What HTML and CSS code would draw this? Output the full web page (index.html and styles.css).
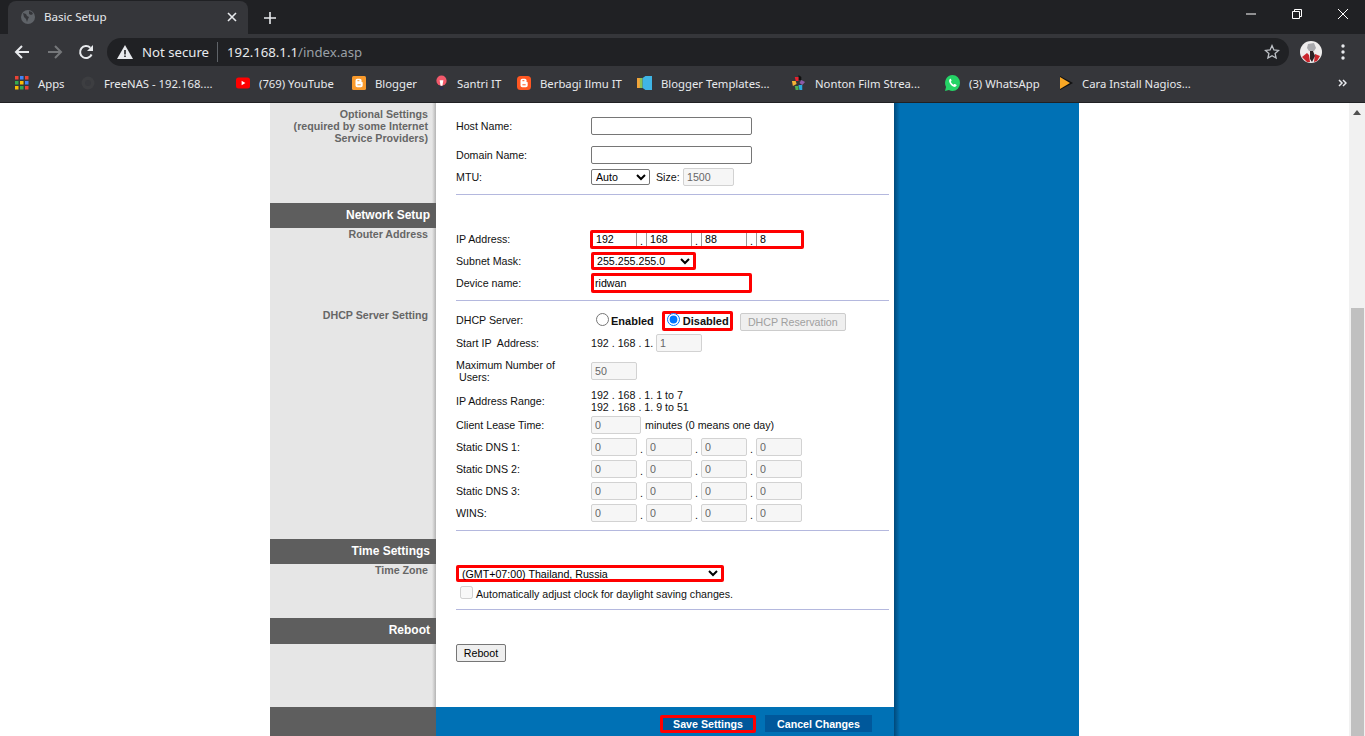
FILE: index.html
```html
<!DOCTYPE html>
<html lang="en">
<head>
  <meta charset="UTF-8">
  <title>Basic Setup</title>
  <link rel="stylesheet" href="styles.css">
</head>
<body>

  <!-- browser chrome -->
  <div class="tabstrip">
    <div class="tab">
      <svg class="tab-icon" width="14" height="14" viewBox="0 0 14 14"><circle cx="7" cy="7" r="7" fill="#5f6368"/><path d="M2 3l3 1 1 2 2 1-1 2-1 3-1-3-2-2zM8 1l3 1 1 2-2 1-2-1z" fill="#35363a"/></svg>
      <span class="tab-title">Basic Setup</span>
      <svg class="tab-close" width="10" height="10" viewBox="0 0 10 10"><path d="M1 1l8 8M9 1l-8 8" stroke="#e8eaed" stroke-width="1.6"/></svg>
    </div>
    <svg class="new-tab" width="12" height="12" viewBox="0 0 12 12"><path d="M6 0v12M0 6h12" stroke="#e8eaed" stroke-width="1.6"/></svg>
    <div class="win-controls">
      <svg width="10" height="10" viewBox="0 0 10 10"><path d="M0 5h10" stroke="#fff"/></svg>
      <svg width="10" height="10" viewBox="0 0 10 10" fill="none"><path d="M.5 2.5h7v7h-7zM2.5 2.5v-2h7v7h-2" stroke="#fff"/></svg>
      <svg width="10" height="10" viewBox="0 0 10 10"><path d="M0 0l10 10M10 0l-10 10" stroke="#fff"/></svg>
    </div>
  </div>

  <div class="toolbar">
    <svg class="nav-icon" width="16" height="16" viewBox="0 0 16 16" fill="none"><path d="M15 8H2M8 2L2 8l6 6" stroke="#e8eaed" stroke-width="2"/></svg>
    <svg class="nav-icon forward" width="16" height="16" viewBox="0 0 16 16" fill="none"><path d="M1 8h13M8 2l6 6-6 6" stroke="#75777a" stroke-width="2"/></svg>
    <svg class="nav-icon" width="16" height="16" viewBox="0 0 16 16" fill="none"><path d="M13.6 10.5A6 6 0 1 1 12.3 3.8" stroke="#e8eaed" stroke-width="2"/><path d="M15 1v6H9z" fill="#e8eaed"/></svg>
    <div class="omnibox">
      <svg width="16" height="14" viewBox="0 0 16 14"><path d="M8 0l8 14H0z" fill="#e8eaed"/><path d="M7.2 5h1.6v4.5H7.2zM7.2 10.5h1.6V12H7.2z" fill="#202124"/></svg>
      <span class="not-secure">Not secure</span>
      <span class="url"><b>192.168.1.1</b>/index.asp</span>
      <svg class="star" width="16" height="16" viewBox="0 0 16 16" fill="none"><path d="M8 1.6l1.9 4.3 4.7.5-3.5 3.1 1 4.6L8 11.8l-4.1 2.3 1-4.6L1.400 6.400l4.700-.5z" stroke="#bdc1c6" stroke-width="1.300"/></svg>
    </div>
    <svg class="avatar" width="22" height="22" viewBox="0 0 22 22"><circle cx="11" cy="11" r="11" fill="#efeded"/><path d="M8 3l6-1 2 5-2 3H9L7 7z" fill="#a9a9ad"/><path d="M2 16l5-4 2 2 1 7H7zM15 13l5 2-3 5-3 1z" fill="#c9252c"/><path d="M10 10h3l2 5-3 6-2-3z" fill="#2b2124"/></svg>
    <svg class="menu-dots" width="4" height="16" viewBox="0 0 4 16"><circle cx="2" cy="2" r="1.700" fill="#e8eaed"/><circle cx="2" cy="8" r="1.700" fill="#e8eaed"/><circle cx="2" cy="14" r="1.700" fill="#e8eaed"/></svg>
  </div>

  <div class="bookmarks">
    <div class="bm">
      <svg width="14" height="14" viewBox="0 0 14 14"><path d="M0 0h3.500v3.500H0z" fill="#ea4335"/><path d="M5 0h3.500v3.500H5z" fill="#4285f4"/><path d="M10 0h3.500v3.500H10z" fill="#ea4335"/><path d="M0 5h3.500v3.500H0z" fill="#34a853"/><path d="M5 5h3.500v3.500H5z" fill="#fbbc05"/><path d="M10 5h3.500v3.500H10z" fill="#4285f4"/><path d="M0 10h3.500v3.500H0z" fill="#fbbc05"/><path d="M5 10h3.500v3.500H5z" fill="#34a853"/><path d="M10 10h3.500v3.500H10z" fill="#ea4335"/></svg>
      <span>Apps</span>
    </div>
    <div class="bm">
      <svg width="14" height="14" viewBox="0 0 14 14"><circle cx="7" cy="7" r="6.500" fill="#3d3e41"/><circle cx="7" cy="7" r="3" fill="#38393d"/></svg>
      <span>FreeNAS - 192.168....</span>
    </div>
    <div class="bm">
      <svg width="14" height="14" viewBox="0 0 14 14"><rect y="1.500" width="14" height="11" rx="2.500" fill="#f00"/><path d="M5.600 4.800L9.400 7l-3.800 2.200z" fill="#fff"/></svg>
      <span>(769) YouTube</span>
    </div>
    <div class="bm">
      <svg width="14" height="14" viewBox="0 0 14 14"><rect width="14" height="14" rx="1.500" fill="#f99a2c"/><path d="M3.500 4.500A1.800 1.800 0 0 1 5.300 2.700h2.200A2 2 0 0 1 9.400 5.600v.2h.3a1 1 0 0 1 1 1v2.700a1.800 1.800 0 0 1-1.800 1.800H5.300a1.800 1.800 0 0 1-1.800-1.800z" fill="#fff"/><path d="M5.400 4.700h2M5.400 8.800h3.300" stroke="#f99a2c"/></svg>
      <span>Blogger</span>
    </div>
    <div class="bm">
      <svg width="13" height="16" viewBox="0 0 14 16"><circle cx="7" cy="5.500" r="5.500" fill="#f2596b"/><path d="M5 5h4L8 11H6z" fill="#fff"/><path d="M5 12h4v3H5z" fill="#2b2c52"/></svg>
      <span>Santri IT</span>
    </div>
    <div class="bm">
      <svg width="14" height="14" viewBox="0 0 14 14"><rect width="14" height="14" rx="3.500" fill="#ff5722"/><path d="M3.500 4.500A1.800 1.800 0 0 1 5.300 2.700h2.200A2 2 0 0 1 9.400 5.600v.2h.3a1 1 0 0 1 1 1v2.700a1.800 1.800 0 0 1-1.800 1.800H5.300a1.800 1.800 0 0 1-1.800-1.800z" fill="#fff"/><path d="M5.400 4.700h2M5.400 8.800h3.300" stroke="#ff5722"/></svg>
      <span>Berbagi Ilmu IT</span>
    </div>
    <div class="bm">
      <svg width="15" height="16" viewBox="0 0 16 16" preserveAspectRatio="none"><path d="M0 3h4v10H0z" fill="#f2a33a"/><path d="M3 3h3v10H3z" fill="#8cc152"/><path d="M6 3l3-2h7v14H9l-3-2z" fill="#3fb5e5"/></svg>
      <span>Blogger Templates...</span>
    </div>
    <div class="bm">
      <svg width="15" height="16" viewBox="0 0 16 16" preserveAspectRatio="none"><path d="M8 0l3 2v3H8z" fill="#111"/><path d="M4 2h4v4H5z" fill="#e8212e"/><path d="M11 5l4 2-3 3-3-2z" fill="#8e5aa8"/><path d="M1 6h4l1 3-4 2z" fill="#f5b335"/><path d="M4 11h4v4H5z" fill="#4caf50"/><path d="M8 10h4v5H9z" fill="#2aa9e0"/></svg>
      <span>Nonton Film Strea...</span>
    </div>
    <div class="bm">
      <svg width="15" height="16" viewBox="0 0 16 16" preserveAspectRatio="none"><path d="M8 0a8 8 0 0 1 0 16 8 8 0 0 1-3.800-1L0 16l1.100-4A8 8 0 0 1 8 0z" fill="#25d366"/><path d="M5.500 3.800c-.8.500-1.400 1.500-1 3 .5 2 2.500 4.300 4.800 5 1.400.4 2.400 0 3-1 .2-.4.100-.8-.2-1l-1.500-.8c-.3-.2-.6-.1-.8.100l-.6.700C8 9.200 6.800 8 6.200 6.800l.6-.7c.2-.2.200-.5.100-.8l-.6-1.300c-.2-.4-.500-.4-.800-.2z" fill="#fff"/></svg>
      <span>(3) WhatsApp</span>
    </div>
    <div class="bm">
      <svg width="13" height="14" viewBox="0 0 13 14"><path d="M0 0l13 7-13 7z" fill="#111"/><path d="M0 1l10 6-10 6z" fill="#f9a825"/></svg>
      <span>Cara Install Nagios...</span>
    </div>
    <svg class="bm-more" width="9" height="8" viewBox="0 0 9 8" fill="none"><path d="M1 1l3 3-3 3M5 1l3 3-3 3" stroke="#e8eaed" stroke-width="1.500"/></svg>
  </div>

  <!-- router page -->
  <div class="viewport">
    <div class="wrapper">

      <div class="sidebar">
        <p class="side-label optional">Optional Settings<br>(required by some Internet<br>Service Providers)</p>
        <h3 class="side-band network">Network Setup</h3>
        <p class="side-label">Router Address</p>
        <p class="side-label dhcp">DHCP Server Setting</p>
        <h3 class="side-band time">Time Settings</h3>
        <p class="side-label">Time Zone</p>
        <h3 class="side-band reboot">Reboot</h3>
        <div class="side-foot"></div>
      </div>

      <div class="main">
        <div class="form">
          <div class="row host"><label>Host Name:</label><input class="wide" type="text"></div>
          <div class="row domain"><label>Domain Name:</label><input class="wide" type="text"></div>
          <div class="row mtu">
            <label>MTU:</label>
            <select class="mtu-select"><option>Auto</option></select>
            <span class="size-label">Size:</span>
            <input class="size-input" type="text" value="1500" disabled>
          </div>
          <hr class="rule r-mtu">

          <div class="row ip-row">
            <label>IP Address:</label>
            <div class="red ip-box">
              <input type="text" value="192"><span class="dot">.</span>
              <input type="text" value="168"><span class="dot">.</span>
              <input type="text" value="88"><span class="dot">.</span>
              <input type="text" value="8">
            </div>
          </div>
          <div class="row">
            <label>Subnet Mask:</label>
            <div class="red mask-box"><select><option>255.255.255.0</option></select></div>
          </div>
          <div class="row">
            <label>Device name:</label>
            <div class="red name-box"><input type="text" value="ridwan"></div>
          </div>
          <hr class="rule r-device">

          <div class="row dhcp-row">
            <label>DHCP Server:</label>
            <label class="radio enabled"><input type="radio" name="dhcp">Enabled</label>
            <label class="red radio disabled-box"><input type="radio" name="dhcp" checked>Disabled</label>
            <button class="reserve" disabled>DHCP Reservation</button>
          </div>
          <div class="row">
            <label>Start IP&nbsp; Address:</label>
            <span class="start-ip">192 . 168 . 1.</span>
            <input class="octet" type="text" value="1" disabled>
          </div>
          <div class="row max-row">
            <label>Maximum Number of<br>&nbsp;Users:</label>
            <input class="octet" type="text" value="50" disabled>
          </div>
          <div class="row range-row">
            <label>IP Address Range:</label>
            <span class="range">192 . 168 . 1. 1 to 7<br>192 . 168 . 1. 9 to 51</span>
          </div>
          <div class="row">
            <label>Client Lease Time:</label>
            <input class="lease" type="text" value="0" disabled>
            <span class="lease-note">minutes (0 means one day)</span>
          </div>
          <div class="row">
            <label>Static DNS 1:</label>
            <div class="quad"><input type="text" value="0" disabled><span class="dot">.</span><input type="text" value="0" disabled><span class="dot">.</span><input type="text" value="0" disabled><span class="dot">.</span><input type="text" value="0" disabled></div>
          </div>
          <div class="row">
            <label>Static DNS 2:</label>
            <div class="quad"><input type="text" value="0" disabled><span class="dot">.</span><input type="text" value="0" disabled><span class="dot">.</span><input type="text" value="0" disabled><span class="dot">.</span><input type="text" value="0" disabled></div>
          </div>
          <div class="row">
            <label>Static DNS 3:</label>
            <div class="quad"><input type="text" value="0" disabled><span class="dot">.</span><input type="text" value="0" disabled><span class="dot">.</span><input type="text" value="0" disabled><span class="dot">.</span><input type="text" value="0" disabled></div>
          </div>
          <div class="row">
            <label>WINS:</label>
            <div class="quad"><input type="text" value="0" disabled><span class="dot">.</span><input type="text" value="0" disabled><span class="dot">.</span><input type="text" value="0" disabled><span class="dot">.</span><input type="text" value="0" disabled></div>
          </div>
          <hr class="rule r-wins">

          <div class="red zone-box"><select><option>(GMT+07:00) Thailand, Russia</option></select></div>
          <div class="dst-row"><input type="checkbox" disabled><span>Automatically adjust clock for daylight saving changes.</span></div>
          <hr class="rule r-zone">

          <button class="reboot-btn">Reboot</button>
        </div>

        <div class="foot">
          <button class="foot-btn red-btn">Save Settings</button>
          <button class="foot-btn cancel">Cancel Changes</button>
        </div>
      </div>

      <div class="blue-side"></div>
    </div>

    <div class="scrollbar">
      <svg width="8" height="5" viewBox="0 0 8 5"><path d="M4 0l4 5H0z" fill="#505050"/></svg>
      <div class="thumb"></div>
    </div>
  </div>

</body>
</html>
```

FILE: styles.css
```css
html, body {
  margin: 0;
  height: 736px;
  overflow: hidden;
  background: #fff;
}

body {
  display: flex;
  flex-direction: column;
  font-family: "Liberation Sans", Arial, sans-serif;
  font-size: 8pt;
  color: #111;
}

/* browser chrome */
.tabstrip {
  height: 34px;
  flex: none;
  background: #202124;
  display: flex;
  align-items: flex-end;
  padding-left: 8px;
  position: relative;
}

.tab {
  width: 240px;
  height: 33px;
  box-sizing: border-box;
  background: #35363a;
  border-radius: 8px 8px 0 0;
  display: flex;
  align-items: center;
  padding: 0 11px 2px 13px;
  color: #e8eaed;
  font-family: "Noto Sans", sans-serif;
  font-size: 11.6px;
}

.tab-title {
  margin-left: 9px;
  flex: 1;
}

.new-tab {
  margin: 0 0 10px 16px;
}

.win-controls {
  margin-left: auto;
  display: flex;
  gap: 36px;
  padding: 0 17px 15px 0;
}

.toolbar {
  height: 33px;
  flex: none;
  background: #35363a;
  display: flex;
  align-items: center;
  box-sizing: border-box;
  padding: 3px 0 0 14px;
}

.nav-icon {
  margin-right: 17px;
}

.nav-icon.forward {
  margin-right: 15px;
}

.omnibox {
  width: 1182px;
  height: 28px;
  margin-left: -4px;
  background: #202124;
  border-radius: 14px;
  display: flex;
  align-items: center;
  box-sizing: border-box;
  padding: 0 9px 0 10px;
  font-family: "Noto Sans", sans-serif;
  font-size: 13.2px;
  color: #9aa0a6;
}

.not-secure {
  color: #e8eaed;
  margin-left: 9px;
  padding-right: 8px;
  border-right: 1px solid #5f6368;
  line-height: 20px;
}

.url {
  margin-left: 9px;
}

.url b {
  font-weight: 400;
  color: #e8eaed;
}

.star {
  margin-left: auto;
}

.avatar {
  margin-left: 11px;
}

.menu-dots {
  margin-left: 19px;
}

.bookmarks {
  height: 36px;
  flex: none;
  box-sizing: border-box;
  background: #35363a;
  border-bottom: 1px solid #202124;
  padding: 0 0 3px 15px;
  display: grid;
  grid-template-columns: 66px 155px 116px 83px 82px 120px 154px 154px 115px 1fr auto;
  align-items: center;
  color: #e8eaed;
  font-family: "Noto Sans", sans-serif;
  font-size: 11.3px;
}

.bm {
  display: flex;
  align-items: center;
  gap: 9px;
  white-space: nowrap;
}

.bm-more {
  margin-right: 18px;
}

/* page */
.viewport {
  flex: 1;
  min-height: 0;
  display: flex;
  overflow: hidden;
}

.wrapper {
  width: 809px;
  margin: 0 auto;
  display: flex;
}

.sidebar {
  width: 166px;
  flex: none;
  display: flex;
  flex-direction: column;
  background: linear-gradient(to right, #e6e6e6 162px, #b4b4b4 166px);
}

.side-label {
  margin: 0;
  padding-right: 8px;
  text-align: right;
  font-weight: bold;
  line-height: 12px;
  color: #666;
}

.optional {
  margin-top: 5px;
}

.dhcp {
  margin-top: 69px;
}

.side-band {
  margin: 0;
  height: 25px;
  flex: none;
  background: #5e5e5e;
  color: #fff;
  font-size: 12px;
  line-height: 24px;
  text-align: right;
  padding-right: 6px;
}

.network {
  margin-top: 59px;
}

.time {
  margin-top: 218px;
}

.reboot {
  margin-top: 42px;
  height: 26px;
}

.side-foot {
  margin-top: auto;
  height: 29px;
  background: #5e5e5e;
}

.main {
  width: 458px;
  flex: none;
  display: flex;
  flex-direction: column;
  background: #fff;
}

.form {
  flex: 1;
  padding: 7px 5px 0 20px;
}

.row {
  display: flex;
  align-items: center;
  height: 22px;
}

.row > label:first-child {
  width: 135px;
  flex: none;
}

input[type="text"], select, button {
  font-family: "Liberation Sans", Arial, sans-serif;
  font-size: 8pt;
}

input[type="text"] {
  box-sizing: border-box;
  padding: 1px 3px;
  height: 18px;
  border: 1px solid #767676;
  border-radius: 2px;
}

input[type="text"]:disabled {
  border-color: #d2d2d2;
  background: #f6f6f6;
  color: #666;
}

select {
  border: 1px solid #767676;
  border-radius: 2px;
  background: #fff;
  color: #000;
}

button {
  border: 1px solid #767676;
  border-radius: 2px;
  background: #efefef;
  color: #000;
}

.host {
  height: 32px;
}

.domain {
  height: 26px;
}

.mtu {
  height: 18px;
}

.wide {
  width: 161px;
}

.mtu-select {
  width: 59px;
  height: 16px;
}

.size-label {
  margin-left: 6px;
  width: 21px;
}

.size-input {
  width: 51px;
  margin-left: 6px;
}

.rule {
  margin: 0;
  border: none;
  height: 1px;
  background: #b4b8de;
}

.r-mtu {
  margin-top: 8px;
  margin-bottom: 33px;
}

.r-device {
  margin-top: 6px;
  margin-bottom: 9px;
}

.r-wins {
  margin-top: 6px;
  margin-bottom: 34px;
}

.r-zone {
  margin-top: 3px;
  margin-bottom: 34px;
}

/* red highlight boxes from the screenshot */
.red {
  box-sizing: border-box;
  border: 3px solid #f00;
  border-radius: 2px;
  display: flex;
  align-items: center;
}

.red input[type="text"], .red select {
  border-radius: 0;
}

.ip-box {
  width: 214px;
  height: 19px;
  margin-left: -1px;
  color: #000;
}

.ip-box input[type="text"] {
  width: 46px;
  height: 13px;
  border: none;
  border-right: 1px solid #999;
  border-left: 1px solid #999;
  padding: 0 3px;
  color: #000;
}

.ip-box input:first-child {
  width: 44px;
  border-left: none;
}

.ip-box input:last-child {
  width: 45px;
  border-right: none;
}

.dot {
  width: 9px;
  text-align: center;
  line-height: 13px;
  padding-top: 4px;
}

.mask-box {
  width: 105px;
  height: 18px;
}

.mask-box select, .zone-box select {
  width: calc(100% + 1px);
  height: calc(100% + 4px);
  margin: -2px 0 -2px -1px;
  border: none;
  padding: 0;
  outline: none;
  background: transparent;
}

.name-box {
  width: 161px;
  height: 20px;
}

.name-box input[type="text"] {
  width: 100%;
  height: 14px;
  border: none;
  padding: 0 0 0 1px;
  color: #000;
}

.dhcp-row > label:first-child {
  padding-bottom: 2px;
}

.radio {
  display: flex;
  align-items: center;
  font-size: 11px;
  font-weight: bold;
}

.radio input {
  margin: -4px 2px 0 0;
  width: 13px;
  height: 13px;
}

.enabled {
  margin-left: 5px;
}

.disabled-box {
  margin-left: 8px;
  width: 71px;
  height: 20px;
  padding-left: 2px;
}

.disabled-box input {
  margin-right: 3px;
}

.reserve {
  margin: 2px 0 0 7px;
  width: 106px;
  height: 18px;
  padding: 0;
  border-color: #ccc;
  color: #a0a0a0;
}

.start-ip {
  width: 65px;
}

.octet {
  width: 46px;
}

.max-row {
  height: 34px;
  line-height: 12px;
}

.range-row {
  height: 26px;
}

.range {
  line-height: 12px;
}

.lease {
  width: 50px;
}

.lease-note {
  margin-left: 4px;
}

.quad {
  display: flex;
  align-items: center;
}

.quad input[type="text"] {
  width: 46px;
}

.zone-box {
  width: 268px;
  height: 17px;
}

.dst-row {
  display: flex;
  align-items: center;
  height: 24px;
  padding-left: 4px;
}

.dst-row input {
  margin: 0 3px 3px 0;
  width: 13px;
  height: 13px;
}

.reboot-btn {
  display: block;
  width: 50px;
  height: 18px;
  padding: 0;
}

.foot {
  height: 29px;
  box-sizing: border-box;
  flex: none;
  background: #0071b5;
  display: flex;
  align-items: center;
  justify-content: flex-end;
  gap: 9px;
  padding: 4px 22px 0 0;
}

.foot-btn {
  height: 17px;
  border: none;
  border-radius: 0;
  padding: 0;
  background: #00589b;
  color: #fff;
  font-weight: bold;
}

.red-btn {
  width: 96px;
  height: 18px;
  box-sizing: border-box;
  border: 3px solid #f00;
  border-radius: 2px;
}

.cancel {
  width: 107px;
}

.blue-side {
  width: 185px;
  flex: none;
  background: linear-gradient(to right, #00497a, #0071b5 6px);
}

.scrollbar {
  width: 16px;
  height: 100%;
  flex: none;
  background: #f1f1f1;
  position: relative;
  display: flex;
  justify-content: center;
  padding-top: 7px;
  box-sizing: border-box;
}

.thumb {
  position: absolute;
  left: 2px;
  right: 1px;
  top: 205px;
  bottom: 0;
  background: #c0c0c0;
}
```
